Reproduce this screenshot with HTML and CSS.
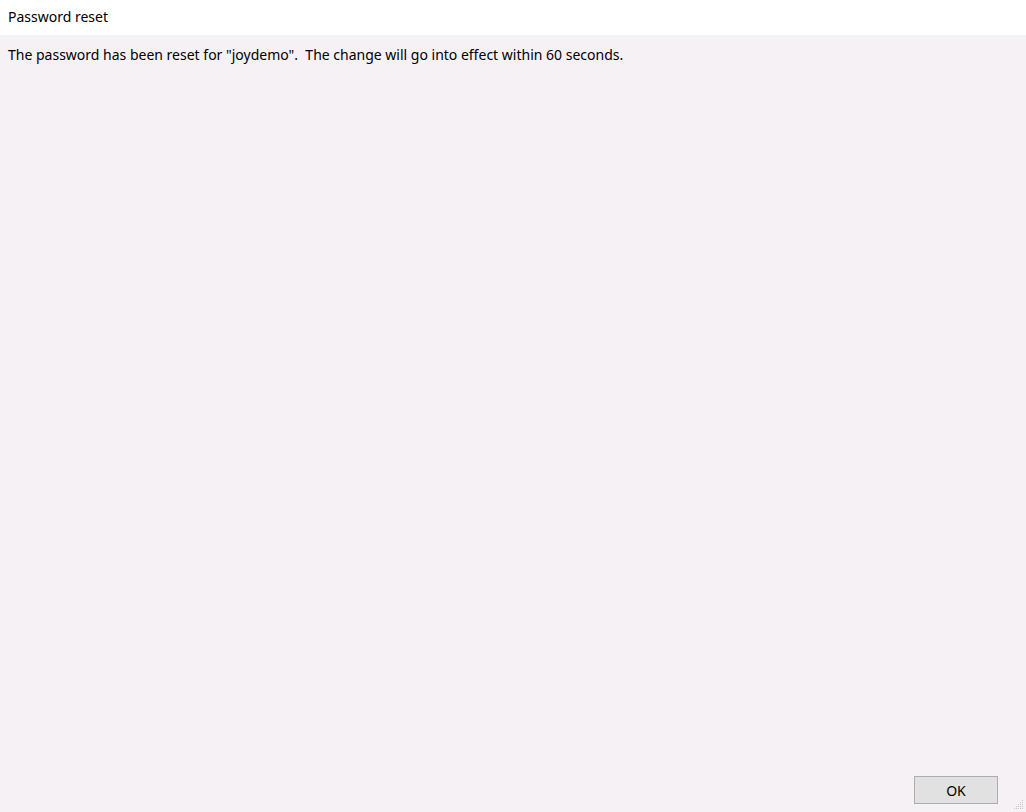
FILE: index.html
```html
<!DOCTYPE html>
<html lang="en">
<head>
  <meta charset="UTF-8" />
  <title>Password reset</title>
  <link rel="stylesheet" href="styles.css">
</head>
<body>
  <div class="dialog">
    <div class="title-bar">Password reset</div>
    <div class="content">
      <p class="message">The password has been reset for "joydemo".&nbsp; The change will go into effect within 60 seconds.</p>
      <div class="footer">
        <button class="ok-button">OK</button>
      </div>
    </div>
    <svg class="grip" width="12" height="12" viewBox="0 0 12 12">
      <rect x="9" y="1" width="1" height="1" fill="#c8c4c8"/>
      <rect x="7" y="3" width="1" height="1" fill="#c8c4c8"/>
      <rect x="9" y="3" width="1" height="1" fill="#c8c4c8"/>
      <rect x="5" y="5" width="1" height="1" fill="#c8c4c8"/>
      <rect x="7" y="5" width="1" height="1" fill="#c8c4c8"/>
      <rect x="9" y="5" width="1" height="1" fill="#c8c4c8"/>
      <rect x="3" y="7" width="1" height="1" fill="#c8c4c8"/>
      <rect x="5" y="7" width="1" height="1" fill="#c8c4c8"/>
      <rect x="7" y="7" width="1" height="1" fill="#c8c4c8"/>
      <rect x="9" y="7" width="1" height="1" fill="#c8c4c8"/>
      <rect x="1" y="9" width="1" height="1" fill="#c8c4c8"/>
      <rect x="3" y="9" width="1" height="1" fill="#c8c4c8"/>
      <rect x="5" y="9" width="1" height="1" fill="#c8c4c8"/>
      <rect x="7" y="9" width="1" height="1" fill="#c8c4c8"/>
      <rect x="9" y="9" width="1" height="1" fill="#c8c4c8"/>
    </svg>
  </div>
</body>
</html>
```

FILE: styles.css
```css
html, body {
  margin: 0;
  padding: 0;
  height: 100%;
}

body {
  font-family: "Noto Sans", "Open Sans", sans-serif;
  font-size: 14px;
  color: #000;
  background: #f6f1f5;
}

.dialog {
  position: relative;
  display: flex;
  flex-direction: column;
  height: 812px;
}

.title-bar {
  height: 35px;
  box-sizing: border-box;
  padding: 7px 0 0 8px;
  background: #ffffff;
  line-height: 19px;
}

.content {
  flex: 1;
  display: flex;
  flex-direction: column;
  padding: 10px 8px 0 8px;
}

.message {
  margin: 0;
  flex: 1;
  line-height: 19px;
}

.footer {
  display: flex;
  justify-content: flex-end;
  padding: 0 20px 8px 0;
}

.ok-button {
  width: 84px;
  height: 28px;
  font-family: inherit;
  font-size: 14px;
  color: #000;
  background: #e1e1e1;
  border: 1px solid #adadad;
  border-radius: 0;
  padding: 0;
}

.grip {
  position: absolute;
  right: 1px;
  bottom: 1px;
}
```
